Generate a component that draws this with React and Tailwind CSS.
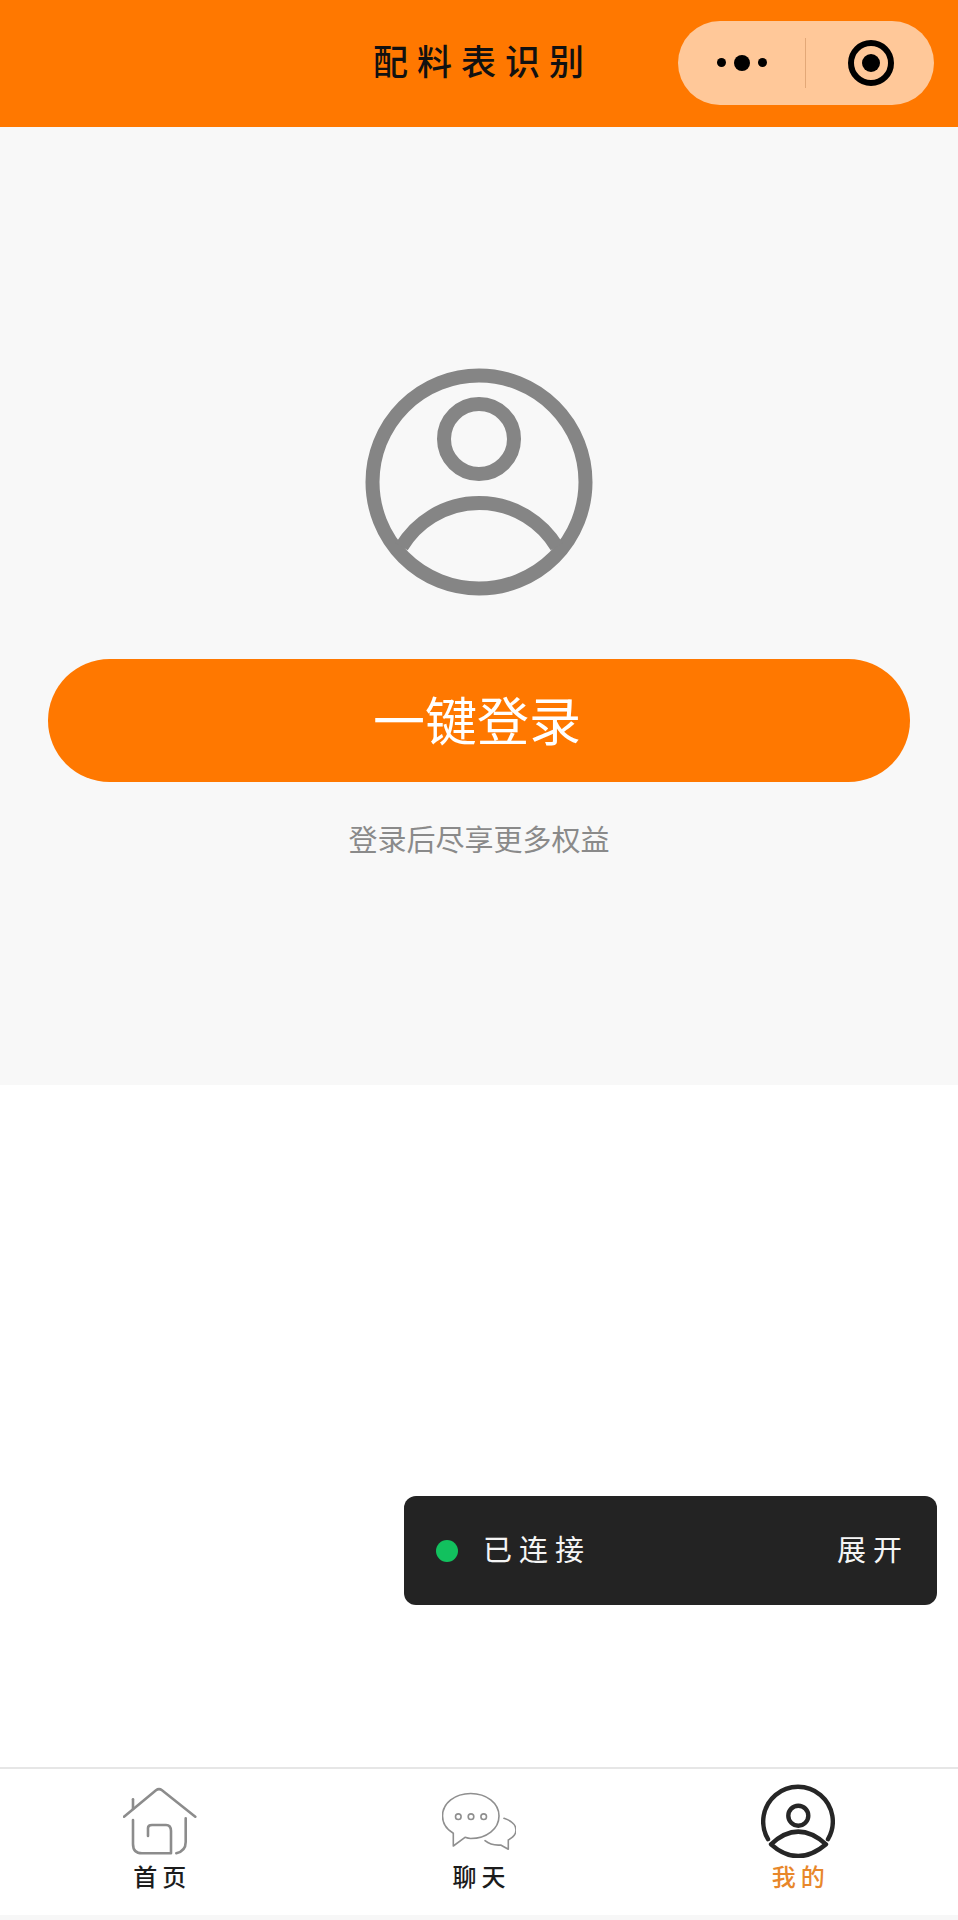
import React from 'react';

function AvatarIcon() {
  return (
    <svg width="228" height="228" viewBox="0 0 228 228" fill="none" stroke="#858585" strokeWidth="14">
      <circle cx="114" cy="114" r="106.5" />
      <circle cx="114" cy="71" r="35" />
      <path d="M36.7 178.7A90.6 90.6 0 0 1 191.7 178.7" />
    </svg>
  );
}

function HomeIcon() {
  return (
    <svg width="74" height="74" viewBox="0 0 74 74" fill="none" stroke="#8c8c8c" strokeWidth="2.6" strokeLinecap="round" strokeLinejoin="round">
      <path d="M1 32.7L33 6.3Q36 4 39 6.3L72.3 32.7" />
      <path d="M10 15.3V25" />
      <path d="M10 36V60Q10 69.3 19 69.3H48V47Q48 41 43 41H29Q25 41 25 44V52" />
      <path d="M62.7 34.3V58Q62.7 67 53.3 69.3" />
    </svg>
  );
}

function ChatIcon() {
  return (
    <svg width="74" height="74" viewBox="0 0 74 74" fill="none" stroke="#8f8f8f" strokeWidth="1.6" strokeLinejoin="round" strokeLinecap="round">
      <path d="M11.3 49.3C4 45 0.5 39 0.5 32C0.5 19 13 9.5 28.7 9.5C44.5 9.5 57 19 57 32C57 45 44.5 54.5 28.7 54.5C26.5 54.5 25 54 23 53.3L11.3 62Z" />
      <circle cx="16.3" cy="32.7" r="2.8" />
      <circle cx="29" cy="32.7" r="2.8" />
      <circle cx="41.7" cy="32.7" r="2.8" />
      <path d="M62 34.3C69 36.5 74 41 74 46C74 50 71 53.5 66.3 56L66.3 65.3L58.7 61C52 61.5 47 60 43 56.7" />
    </svg>
  );
}

function MeIcon() {
  return (
    <svg width="74" height="74" viewBox="0 0 74 74" fill="none" stroke="#262626" strokeWidth="4.4" strokeLinejoin="round" strokeLinecap="round">
      <path d="M7 55.2A34.8 34.8 0 1 1 67 55.2" />
      <circle cx="37.3" cy="31.7" r="10" />
      <path d="M10 60.3Q37 35 65 60.3Q37 84 10 60.3Z" />
    </svg>
  );
}

function TabItem({ icon, label, active }) {
  return (
    <div className="flex flex-1 flex-col items-center">
      {icon}
      <span
        className={`mt-[1px] pl-[5px] text-[24px] leading-[34px] font-medium tracking-[5px] ${
          active ? 'text-[#e8872a]' : 'text-[#1c1c1c]'
        }`}
      >
        {label}
      </span>
    </div>
  );
}

export default function App() {
  return (
    <div className="flex h-[1920px] w-[958px] flex-col bg-white font-['Noto_Sans_CJK_SC',sans-serif]">
      {/* title bar */}
      <header className="grid h-[127px] shrink-0 grid-cols-[1fr_auto_1fr] items-center bg-[#ff7800] pb-[2px]">
        <div />
        <h1 className="pb-[4px] pl-[8px] text-[35px] font-medium tracking-[9px] text-[#111]">配料表识别</h1>
        <div className="flex justify-end pr-[24px]">
          <div className="flex h-[84px] w-[256px] items-center rounded-full bg-[#ffc899]">
            <div className="flex flex-1 items-center justify-center gap-[8px]">
              <span className="h-[9px] w-[9px] rounded-full bg-black" />
              <span className="h-[16px] w-[16px] rounded-full bg-black" />
              <span className="h-[9px] w-[9px] rounded-full bg-black" />
            </div>
            <div className="h-[50px] w-px bg-[#e3a877]" />
            <div className="flex w-[128px] items-center justify-center pl-[2px]">
              <div className="flex h-[46px] w-[46px] items-center justify-center rounded-full border-[6px] border-black">
                <span className="h-[18px] w-[18px] rounded-full bg-black" />
              </div>
            </div>
          </div>
        </div>
      </header>

      {/* login panel */}
      <section className="flex h-[958px] shrink-0 flex-col items-center bg-[#f8f8f8] px-[48px] pt-[241px]">
        <AvatarIcon />
        <button className="mt-[63px] flex h-[123px] w-full items-center justify-center rounded-full bg-[#ff7800] pr-[4px] pb-[4px] text-[52px] font-normal text-white">
          一键登录
        </button>
        <p className="mt-[36px] text-[29px] leading-[40px] font-normal text-[#8a8a8a]">登录后尽享更多权益</p>
      </section>

      <div className="relative flex-1">
        {/* connection toast */}
        <div className="absolute top-[411px] left-[404px] flex h-[109px] w-[533px] items-center justify-between rounded-[12px] bg-[#232323] pr-[28px] pl-[32px] text-[#f5f5f5]">
          <div className="flex items-center gap-[25px]">
            <span className="h-[22px] w-[22px] rounded-full bg-[#12c15e]" />
            <span className="pb-[4px] text-[29px] tracking-[7px]">已连接</span>
          </div>
          <span className="pb-[4px] text-[29px] tracking-[7px]">展开</span>
        </div>
      </div>

      {/* tab bar */}
      <nav className="flex h-[148px] shrink-0 border-t-2 border-[#e6e6e6] pt-[15px]">
        <TabItem icon={<HomeIcon />} label="首页" />
        <TabItem icon={<ChatIcon />} label="聊天" />
        <TabItem icon={<MeIcon />} label="我的" active />
      </nav>
      <div className="h-[5px] shrink-0 bg-[#f7f7f7]" />
    </div>
  );
}
